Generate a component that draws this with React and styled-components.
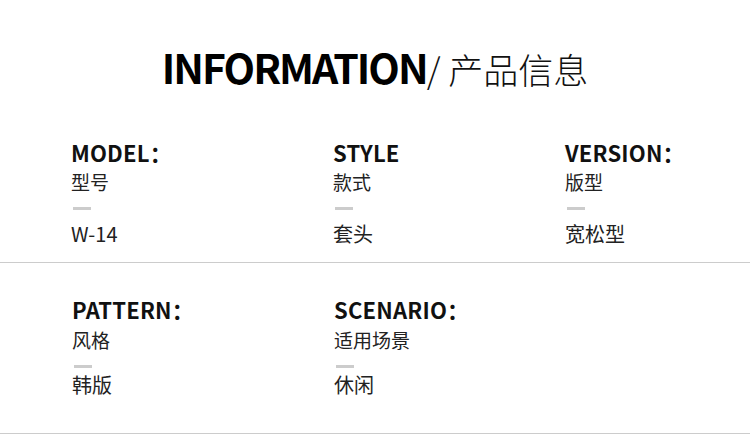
import React from 'react';
import styled, { createGlobalStyle } from 'styled-components';

const GlobalStyle = createGlobalStyle`
  body {
    margin: 0;
    background: #ffffff;
    font-family: "Noto Sans CJK SC", "Noto Sans", sans-serif;
    color: #111;
  }
`;

const Page = styled.div`
  width: 750px;
  height: 441px;
  overflow: hidden;
  background: #fff;
`;

const Header = styled.div`
  display: flex;
  justify-content: center;
  align-items: baseline;
  padding: 36px 0 0 0;
  height: 100px;
  box-sizing: border-box;
`;

const TitleEn = styled.span`
  font-size: 41px;
  font-weight: 700;
  letter-spacing: -2px;
  line-height: 60px;
  color: #000;
`;

const TitleCn = styled.span`
  font-size: 35px;
  font-weight: 300;
  line-height: 60px;
  color: #111;
`;

const Row = styled.div`
  display: grid;
  grid-template-columns: 262px 232px 1fr;
  padding: ${(p) => p.$pad};
  border-bottom: 1px solid #cccccc;
`;

const Item = styled.div`
  display: flex;
  flex-direction: column;
  align-items: flex-start;
`;

const Label = styled.div`
  font-size: 22px;
  font-weight: 700;
  line-height: 32px;
  color: #111;
  letter-spacing: 0.2px;
`;

const Sub = styled.div`
  font-size: 19px;
  line-height: 28px;
  color: #222;
  margin-top: ${(p) => p.$top};
`;

const Dash = styled.div`
  width: 18px;
  height: 3px;
  background: #cccccc;
  margin: ${(p) => p.$gap};
`;

const Value = styled.div`
  font-size: 20px;
  line-height: 29px;
  color: #222;
`;

const rows = [
  {
    pad: '36px 0 14px 71px',
    top: '0',
    gap: '11px 0 9px 2px',
    items: [
      ['MODEL：', '型号', 'W-14'],
      ['STYLE', '款式', '套头'],
      ['VERSION：', '版型', '宽松型'],
    ],
  },
  {
    pad: '30px 0 34px 72px',
    top: '1px',
    gap: '11px 0 2px 2px',
    items: [
      ['PATTERN：', '风格', '韩版'],
      ['SCENARIO：', '适用场景', '休闲'],
    ],
  },
];

export default function App() {
  return (
    <Page>
      <GlobalStyle />
      <Header>
        <TitleEn>INFORMATION</TitleEn>
        <TitleCn>/ 产品信息</TitleCn>
      </Header>
      {rows.map((row, i) => (
        <Row key={i} $pad={row.pad}>
          {row.items.map(([label, sub, value]) => (
            <Item key={label}>
              <Label>{label}</Label>
              <Sub $top={row.top}>{sub}</Sub>
              <Dash $gap={row.gap} />
              <Value>{value}</Value>
            </Item>
          ))}
        </Row>
      ))}
    </Page>
  );
}
